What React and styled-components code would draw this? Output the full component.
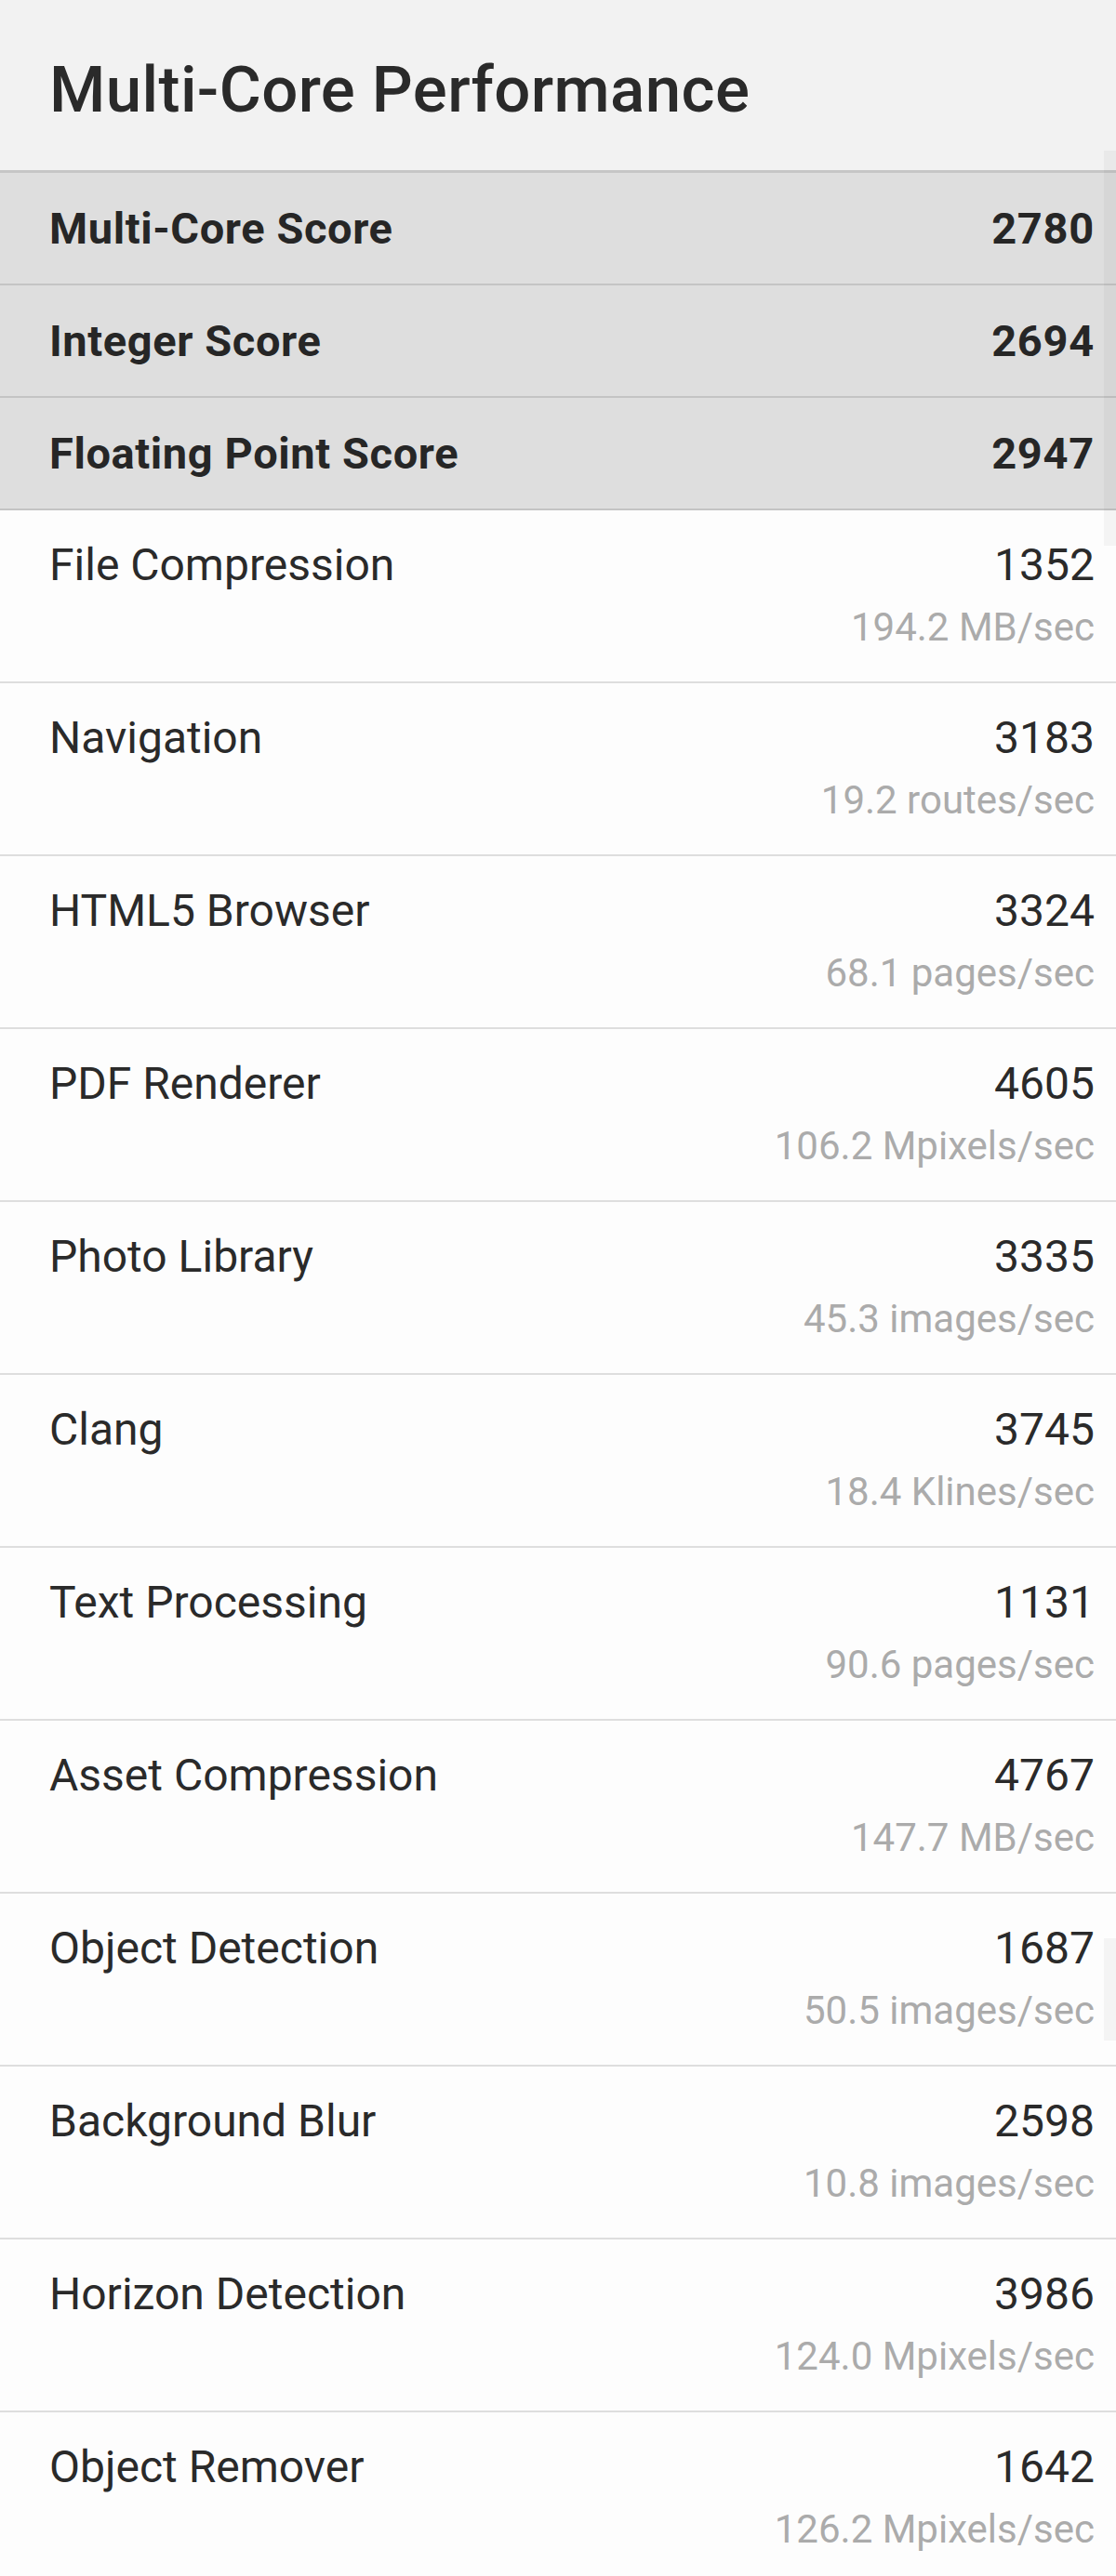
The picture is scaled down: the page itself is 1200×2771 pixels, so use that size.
import styled, { createGlobalStyle } from "styled-components";

const GlobalStyle = createGlobalStyle`
  html, body {
    margin: 0;
    padding: 0;
    background: #fdfdfd;
  }
  body {
    font-family: Roboto, "Noto Sans", sans-serif;
    color: #252525;
  }
`;

const scores = [
  { name: "Multi-Core Score", value: 2780 },
  { name: "Integer Score", value: 2694 },
  { name: "Floating Point Score", value: 2947 },
];

const tests = [
  { name: "File Compression", value: 1352, rate: "194.2 MB/sec" },
  { name: "Navigation", value: 3183, rate: "19.2 routes/sec" },
  { name: "HTML5 Browser", value: 3324, rate: "68.1 pages/sec" },
  { name: "PDF Renderer", value: 4605, rate: "106.2 Mpixels/sec" },
  { name: "Photo Library", value: 3335, rate: "45.3 images/sec" },
  { name: "Clang", value: 3745, rate: "18.4 Klines/sec" },
  { name: "Text Processing", value: 1131, rate: "90.6 pages/sec" },
  { name: "Asset Compression", value: 4767, rate: "147.7 MB/sec" },
  { name: "Object Detection", value: 1687, rate: "50.5 images/sec" },
  { name: "Background Blur", value: 2598, rate: "10.8 images/sec" },
  { name: "Horizon Detection", value: 3986, rate: "124.0 Mpixels/sec" },
  { name: "Object Remover", value: 1642, rate: "126.2 Mpixels/sec" },
];

export default function App() {
  return (
    <Page>
      <GlobalStyle />
      <Header>
        <Title>Multi-Core Performance</Title>
      </Header>
      <ScoreList>
        {scores.map(s => (
          <ScoreRow key={s.name}>
            <ScoreName>{s.name}</ScoreName>
            <ScoreValue>{s.value}</ScoreValue>
          </ScoreRow>
        ))}
        <ScrollHint $top={-24} $height={425} />
      </ScoreList>
      <TestList>
        {tests.map(t => (
          <TestRow key={t.name}>
            <TestName>{t.name}</TestName>
            <TestNumbers>
              <TestValue>{t.value}</TestValue>
              <TestRate>{t.rate}</TestRate>
            </TestNumbers>
          </TestRow>
        ))}
        <ScrollHint $top={1536} $height={110} />
      </TestList>
    </Page>
  );
}

const Page = styled.div`
  width: 1200px;
  height: 2771px;
  overflow: hidden;
  background: #fdfdfd;
`;

const Header = styled.header`
  box-sizing: border-box;
  height: 186px;
  display: flex;
  align-items: center;
  padding: 10px 0 0 53px;
  background: #f2f2f2;
  border-bottom: 3px solid #c6c6c6;
`;

const Title = styled.h1`
  margin: 0;
  font-size: 69px;
  font-weight: 500;
  color: #2a2a2a;
  letter-spacing: 0.4px;
`;

const ScoreList = styled.div`
  position: relative;
`;

const ScoreRow = styled.div`
  box-sizing: border-box;
  height: 121px;
  display: flex;
  align-items: center;
  justify-content: space-between;
  padding: 0 23px 0 53px;
  background: #dedede;
  border-bottom: 2px solid #c4c4c4;
`;

const ScoreName = styled.span`
  font-size: 47px;
  font-weight: 700;
  letter-spacing: 0.6px;
  color: #262626;
`;

const ScoreValue = styled.span`
  font-size: 47px;
  font-weight: 700;
  letter-spacing: 0.75px;
  color: #262626;
`;

const TestList = styled.div`
  position: relative;
`;

const TestRow = styled.div`
  box-sizing: border-box;
  height: 186px;
  display: flex;
  justify-content: space-between;
  padding: 29px 23px 0 53px;
  border-bottom: 2px solid #dedede;
`;

const TestName = styled.span`
  font-size: 48px;
  line-height: 60px;
  font-weight: 400;
  color: #2a2a2a;
`;

const TestNumbers = styled.div`
  display: flex;
  flex-direction: column;
  align-items: flex-end;
`;

const TestValue = styled.span`
  font-size: 48px;
  line-height: 60px;
  color: #2a2a2a;
`;

const TestRate = styled.span`
  font-size: 42px;
  line-height: 74px;
  color: #ababab;
`;

const ScrollHint = styled.div`
  position: absolute;
  right: 0;
  top: ${p => p.$top}px;
  width: 13px;
  height: ${p => p.$height}px;
  background: rgba(0, 0, 0, 0.035);
`;
